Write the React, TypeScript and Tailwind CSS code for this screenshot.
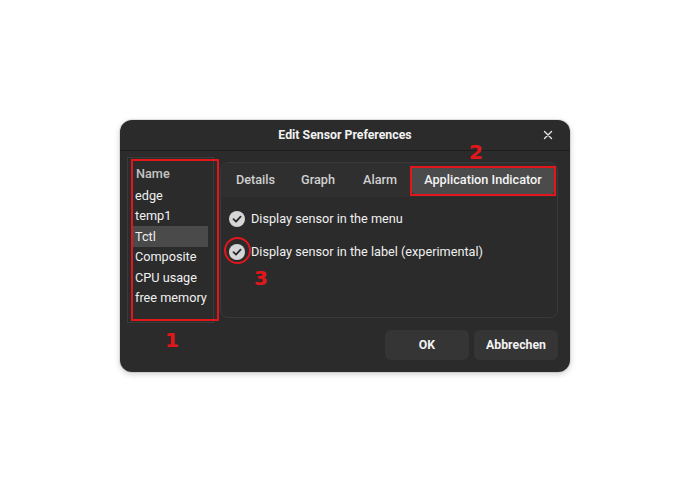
import React from "react";

const sensors = ["edge", "temp1", "Tctl", "Composite", "CPU usage", "free memory"];
const tabs = [
  { label: "Details", w: "w-[63px]" },
  { label: "Graph", w: "w-[62px]" },
  { label: "Alarm", w: "w-[62px]" },
];

const Check = () => (
  <span className="w-[16px] h-[16px] rounded-full bg-[#d6d6d6] flex items-center justify-center shrink-0">
    <svg width="10" height="10" viewBox="0 0 10 10" fill="none">
      <path d="M1.5 5.2 L4 7.6 L8.6 2.6" stroke="#2b2b2b" strokeWidth="1.8" strokeLinecap="round" strokeLinejoin="round" />
    </svg>
  </span>
);

const App = () => {
  return (
    <div className="w-[690px] h-[492px] bg-white flex justify-center pt-[120px] font-['Roboto',sans-serif] text-[12.7px]">
      <div className="relative w-[450px] h-[252px] rounded-[12px] bg-[#2b2b2b] shadow-[0_0_0_1px_rgba(0,0,0,0.08),0_2px_6px_rgba(0,0,0,0.2)] flex flex-col">
        {/* header */}
        <div className="relative h-[31px] shrink-0 border-b border-[#1e1e1e] flex items-center justify-center">
          <span className="font-bold text-[12.3px] text-[#f2f2f2]">Edit Sensor Preferences</span>
          <span className="absolute right-[16px] top-[9px]">
            <svg width="12" height="12" viewBox="0 0 12 12">
              <path d="M2.5 2.5 L9.5 9.5 M9.5 2.5 L2.5 9.5" stroke="#e6e6e6" strokeWidth="1.4" strokeLinecap="round" />
            </svg>
          </span>
        </div>

        {/* body */}
        <div className="flex pl-[7px] pr-[12px] pt-[6px] gap-[6px]">
          <div className="w-[87px] h-[166px] border border-[#3a3a3a] pt-[5px] px-[5px]">
            <div className="h-[22px] flex items-center pl-[3px] font-medium text-[#c4c4c4]">Name</div>
            {sensors.map((s) => (
              <div
                key={s}
                className={`h-[20.5px] flex items-center pl-[2px] text-[#f0f0f0] whitespace-nowrap ${
                  s === "Tctl" ? "bg-[#4a4a4a]" : ""
                }`}
              >
                {s}
              </div>
            ))}
          </div>

          <div className="w-[338px] h-[156px] mt-[5px] border border-[#3a3a3a] rounded-[8px] overflow-hidden flex flex-col">
            <div className="h-[34px] bg-[#2f2f2f] flex items-center px-[3px]">
              {tabs.map((t) => (
                <div key={t.label} className={`${t.w} h-[27px] flex items-center justify-center font-medium text-[#d0d0d0]`}>
                  {t.label}
                </div>
              ))}
              <div className="w-[142px] h-[27px] ml-auto rounded-[3px] bg-[#4b4b4b] flex items-center justify-center font-medium text-[#f4f4f4]">
                Application Indicator
              </div>
            </div>
            <div className="pl-[8px] pt-[5px] flex flex-col">
              <div className="h-[33px] flex items-center gap-[6px] text-[#f0f0f0]">
                <Check />
                <span>Display sensor in the menu</span>
              </div>
              <div className="h-[33px] flex items-center gap-[6px] text-[#f0f0f0]">
                <Check />
                <span>Display sensor in the label (experimental)</span>
              </div>
            </div>
          </div>
        </div>

        {/* buttons */}
        <div className="flex justify-end gap-[5px] pr-[12px] mt-[7px]">
          <button className="w-[84px] h-[30px] rounded-[6px] bg-[#353535] font-bold text-[12.3px] text-[#f2f2f2]">OK</button>
          <button className="w-[84px] h-[30px] rounded-[6px] bg-[#353535] font-bold text-[12.3px] text-[#f2f2f2]">Abbrechen</button>
        </div>

        {/* annotations */}
        <div className="absolute left-[11px] top-[39px] w-[88px] h-[162px] border-2 border-[#e3161c]" />
        <div className="absolute left-[44px] top-[207px] w-[16px] text-center text-[20px] font-bold leading-[26px] text-[#e3161c] font-['DejaVu_Sans',sans-serif]">1</div>
        <div className="absolute left-[290px] top-[46px] w-[146px] h-[30px] border-2 border-[#e3161c]" />
        <div className="absolute left-[348px] top-[19px] w-[16px] text-center text-[20px] font-bold leading-[26px] text-[#e3161c] font-['DejaVu_Sans',sans-serif]">2</div>
        <div className="absolute left-[104px] top-[117px] w-[27px] h-[27px] rounded-full border-2 border-[#e3161c]" />
        <div className="absolute left-[133px] top-[145px] w-[16px] text-center text-[20px] font-bold leading-[26px] text-[#e3161c] font-['DejaVu_Sans',sans-serif]">3</div>
      </div>
    </div>
  );
};

export default App;
